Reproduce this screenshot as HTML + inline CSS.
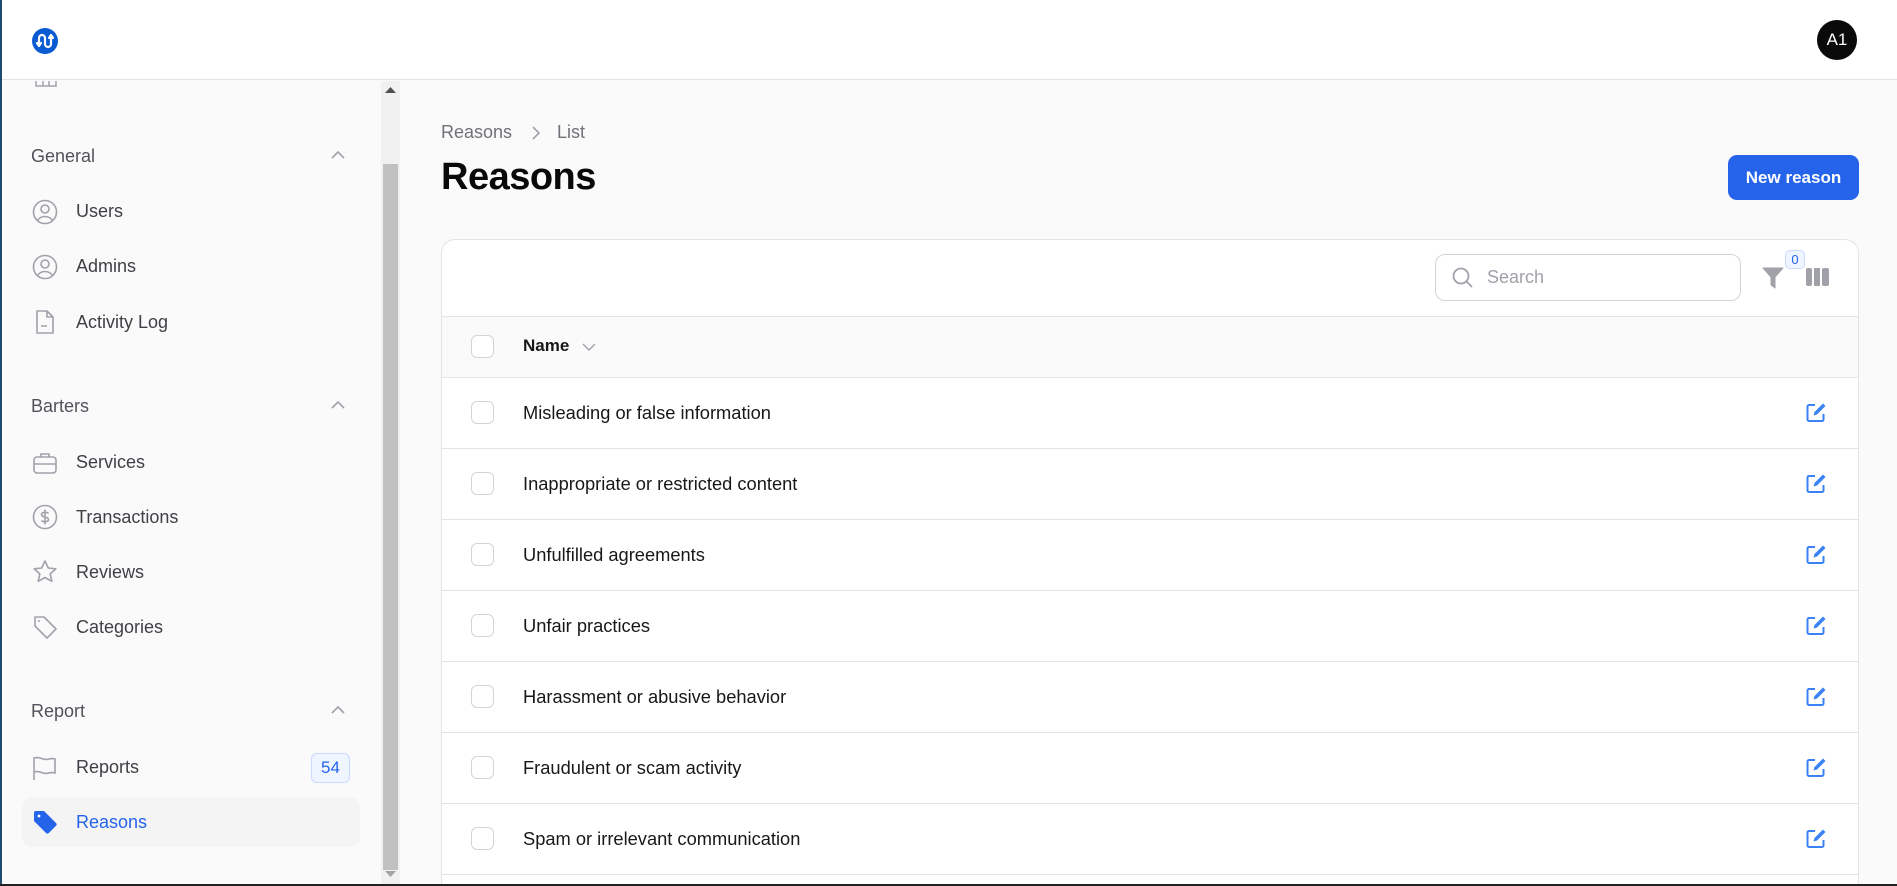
<!DOCTYPE html>
<html><head><meta charset="utf-8"><style>
*{box-sizing:border-box;margin:0;padding:0}
html,body{width:1897px;height:886px;overflow:hidden}
body{background:#fafafa;font-family:"Liberation Sans",sans-serif;position:relative;color:#18181b}
.hdr{position:absolute;left:0;top:0;width:1897px;height:80px;background:#fff;border-bottom:1px solid #e4e4e7}
.lb{position:absolute;left:0;top:0;width:2px;height:886px;background:#1e4b6e}
.bot{position:absolute;left:0;top:884px;width:1897px;height:2px;background:#222}
.side{position:absolute;left:0;top:81px;width:381px;height:805px;background:#fafafa}
.sb{position:absolute;left:381px;top:81px;width:19px;height:805px;background:#f1f1f1}
.thumb{position:absolute;left:383px;top:164px;width:15px;height:706px;background:#c1c1c1}
.sec{position:absolute;left:31px;font-size:18px;color:#52525b}
.chev{position:absolute;left:331px}
.it{position:absolute;left:76px;font-size:18px;color:#3f3f46}
.ic{position:absolute;left:32px;width:26px;height:26px}
.card{position:absolute;left:441px;top:239px;width:1418px;height:660px;background:#fff;border:1px solid #e4e4e7;border-radius:14px;overflow:hidden}
.row{position:absolute;left:0;width:1418px;height:71px;border-top:1px solid #e4e4e7}
.cb{position:absolute;left:29px;width:23px;height:23px;border:1px solid #d4d4d8;border-radius:6px;background:#fff;top:23px}
.rt{position:absolute;left:81px;top:24px;font-size:18.3px;color:#18181b}
.ed{position:absolute;left:1364px;top:24px}
</style></head><body>
<div class="hdr">
<svg style="position:absolute;left:31px;top:27px" width="28" height="28" viewBox="0 0 28 28"><circle cx="14" cy="14" r="13" fill="#0b5bd3"/><path d="M8 18V11a3 3 0 0 1 6 0v6a3 3 0 0 0 6 0v-8M6 16l2 3 2-3M18 11l2-3 2 3" stroke="#fff" stroke-width="2.2" fill="none" stroke-linecap="round" stroke-linejoin="round"/></svg>
<div style="position:absolute;left:1817px;top:20px;width:40px;height:40px;border-radius:50%;background:#0a0a0a;color:#fff;font-size:17px;text-align:center;line-height:40px">A1</div>
</div>
<div class="side">
<svg style="position:absolute;left:35px;top:0" width="22" height="6"><path d="M1 0v5h20V0M8 0v5M14 0v5" stroke="#a1a1aa" stroke-width="1.5" fill="none"/></svg>
<div class="sec" style="top:65px">General</div>
<svg class="chev" style="top:69px" width="14" height="10"><path d="M1 8l6-6 6 6" stroke="#a1a1aa" stroke-width="1.6" fill="none"/></svg>
<svg class="ic" style="top:118px" viewBox="0 0 26 26"><circle cx="13" cy="13" r="11.5" stroke="#a1a1aa" stroke-width="1.6" fill="none"/><circle cx="13" cy="10" r="4" stroke="#a1a1aa" stroke-width="1.6" fill="none"/><path d="M5.5 21.5c2-3 4.5-4 7.5-4s5.5 1 7.5 4" stroke="#a1a1aa" stroke-width="1.6" fill="none"/></svg>
<div class="it" style="top:120px">Users</div>
<svg class="ic" style="top:173px" viewBox="0 0 26 26"><circle cx="13" cy="13" r="11.5" stroke="#a1a1aa" stroke-width="1.6" fill="none"/><circle cx="13" cy="10" r="4" stroke="#a1a1aa" stroke-width="1.6" fill="none"/><path d="M5.5 21.5c2-3 4.5-4 7.5-4s5.5 1 7.5 4" stroke="#a1a1aa" stroke-width="1.6" fill="none"/></svg>
<div class="it" style="top:175px">Admins</div>
<svg class="ic" style="top:228px" viewBox="0 0 26 26"><path d="M5 2h10l6 6v16H5z M15 2v6h6 M9 17h6" stroke="#a1a1aa" stroke-width="1.6" fill="none" stroke-linejoin="round"/></svg>
<div class="it" style="top:231px">Activity Log</div>
<div class="sec" style="top:315px">Barters</div>
<svg class="chev" style="top:319px" width="14" height="10"><path d="M1 8l6-6 6 6" stroke="#a1a1aa" stroke-width="1.6" fill="none"/></svg>
<svg class="ic" style="top:369px" viewBox="0 0 26 26"><rect x="2" y="7" width="22" height="16" rx="3" stroke="#a1a1aa" stroke-width="1.6" fill="none"/><path d="M9 7V4h8v3M2 14h22" stroke="#a1a1aa" stroke-width="1.6" fill="none"/></svg>
<div class="it" style="top:371px">Services</div>
<svg class="ic" style="top:423px" viewBox="0 0 26 26"><circle cx="13" cy="13" r="11.5" stroke="#a1a1aa" stroke-width="1.6" fill="none"/><path d="M16.5 9.5c-1-1.5-7-2-7 1s7 2 7 5-6 2.5-7 1M13 5.5v15" stroke="#a1a1aa" stroke-width="1.6" fill="none"/></svg>
<div class="it" style="top:426px">Transactions</div>
<svg class="ic" style="top:478px" viewBox="0 0 26 26"><path d="M13 2l3.3 7 7.5.8-5.6 5.1 1.6 7.4L13 18.5l-6.8 3.8 1.6-7.4L2.2 9.8l7.5-.8z" stroke="#a1a1aa" stroke-width="1.6" fill="none" stroke-linejoin="round"/></svg>
<div class="it" style="top:481px">Reviews</div>
<svg class="ic" style="top:533px" viewBox="0 0 26 26"><path d="M3 3h9l12 12-9 9L3 12z" stroke="#a1a1aa" stroke-width="1.6" fill="none" stroke-linejoin="round"/><circle cx="7" cy="7" r="1" fill="#a1a1aa"/></svg>
<div class="it" style="top:536px">Categories</div>
<div class="sec" style="top:620px">Report</div>
<svg class="chev" style="top:624px" width="14" height="10"><path d="M1 8l6-6 6 6" stroke="#a1a1aa" stroke-width="1.6" fill="none"/></svg>
<svg class="ic" style="top:674px" viewBox="0 0 26 26"><path d="M2 25V3c7-2 8 3 15 1 3-.8 6 0 6 0v14s-3-.8-6 0c-7 2-8-3-15-1" stroke="#a1a1aa" stroke-width="1.6" fill="none"/></svg>
<div class="it" style="top:676px">Reports</div>
<div style="position:absolute;left:311px;top:672px;width:39px;height:30px;border:1px solid #c7dbfb;background:#eff5ff;border-radius:6px;color:#2563eb;font-size:17px;text-align:center;line-height:28px">54</div>
<div style="position:absolute;left:22px;top:716px;width:338px;height:50px;background:#f4f4f5;border-radius:10px"></div>
<svg class="ic" style="top:728px" viewBox="0 0 26 26"><path d="M2 4a2 2 0 0 1 2-2h8l12 12a2 2 0 0 1 0 2.8l-7.2 7.2a2 2 0 0 1-2.8 0L2 12z" fill="#2563eb"/><circle cx="7" cy="7" r="1.4" fill="#fff"/></svg>
<div class="it" style="top:731px;color:#2563eb">Reasons</div>
</div>
<div class="sb"></div><div class="thumb"></div>
<svg style="position:absolute;left:385px;top:87px" width="11" height="7"><path d="M0 6l5.5-6 5.5 6z" fill="#505050"/></svg>
<svg style="position:absolute;left:385px;top:871px" width="11" height="7"><path d="M0 0l5.5 6 5.5-6z" fill="#a3a3a3"/></svg>
<div style="position:absolute;left:441px;top:122px;font-size:18px;color:#71717a">Reasons</div>
<svg style="position:absolute;left:531px;top:126px" width="10" height="14"><path d="M2 1l6 6-6 6" stroke="#a1a1aa" stroke-width="1.6" fill="none"/></svg>
<div style="position:absolute;left:557px;top:122px;font-size:18px;color:#71717a">List</div>
<div style="position:absolute;left:441px;top:156px;font-size:38px;font-weight:bold;color:#09090b;letter-spacing:-0.5px">Reasons</div>
<div style="position:absolute;left:1728px;top:155px;width:131px;height:45px;background:#2563eb;border-radius:9px;color:#fff;font-weight:bold;font-size:17px;text-align:center;line-height:45px">New reason</div>
<div class="card">
<div style="position:absolute;left:993px;top:14px;width:306px;height:47px;border:1px solid #d4d4d8;border-radius:10px">
<svg style="position:absolute;left:16px;top:12px" width="22" height="22" viewBox="0 0 22 22"><circle cx="9" cy="9" r="7.5" stroke="#a1a1aa" stroke-width="1.8" fill="none"/><path d="M14.5 14.5l5.5 5.5" stroke="#a1a1aa" stroke-width="1.8"/></svg>
<div style="position:absolute;left:51px;top:12px;font-size:18px;color:#a1a1aa">Search</div></div>
<svg style="position:absolute;left:1320px;top:26px" width="22" height="23" viewBox="0 0 22 23"><path d="M1 2h20l-8 9v11l-4-3v-8z" fill="#a1a1aa" stroke="#a1a1aa" stroke-linejoin="round"/></svg>
<div style="position:absolute;left:1343px;top:10px;width:20px;height:19px;border:1px solid #c7dbfb;background:#eff5ff;border-radius:5px;color:#2563eb;font-size:13px;text-align:center;line-height:17px">0</div>
<svg style="position:absolute;left:1364px;top:28px" width="23" height="18"><rect x="0" y="0" width="6" height="18" rx="2" fill="#a1a1aa"/><rect x="8" y="0" width="6" height="18" fill="#a1a1aa"/><rect x="16" y="0" width="7" height="18" rx="2" fill="#a1a1aa"/></svg>
<div class="row" style="top:76px;height:61px;background:#fafafa"><div class="cb" style="top:18px"></div><div class="rt" style="top:19px;font-weight:bold;font-size:17px">Name</div>
<svg style="position:absolute;left:140px;top:26px" width="14" height="9"><path d="M1 1l6 6 6-6" stroke="#a1a1aa" stroke-width="1.4" fill="none"/></svg></div>
<div class="row" style="top:137px"><div class="cb"></div><div class="rt">Misleading or false information</div><svg class="ed" width="21" height="21" viewBox="0 0 21 21"><path d="M9 3H3a1.5 1.5 0 0 0-1.5 1.5v13A1.5 1.5 0 0 0 3 19h13a1.5 1.5 0 0 0 1.5-1.5V12" stroke="#3b82f6" stroke-width="2" fill="none"/><path d="M17 1.5l2.5 2.5L11 12.5l-3.5 1 1-3.5z" fill="#3b82f6"/></svg></div>
<div class="row" style="top:208px"><div class="cb"></div><div class="rt">Inappropriate or restricted content</div><svg class="ed" width="21" height="21" viewBox="0 0 21 21"><path d="M9 3H3a1.5 1.5 0 0 0-1.5 1.5v13A1.5 1.5 0 0 0 3 19h13a1.5 1.5 0 0 0 1.5-1.5V12" stroke="#3b82f6" stroke-width="2" fill="none"/><path d="M17 1.5l2.5 2.5L11 12.5l-3.5 1 1-3.5z" fill="#3b82f6"/></svg></div>
<div class="row" style="top:279px"><div class="cb"></div><div class="rt">Unfulfilled agreements</div><svg class="ed" width="21" height="21" viewBox="0 0 21 21"><path d="M9 3H3a1.5 1.5 0 0 0-1.5 1.5v13A1.5 1.5 0 0 0 3 19h13a1.5 1.5 0 0 0 1.5-1.5V12" stroke="#3b82f6" stroke-width="2" fill="none"/><path d="M17 1.5l2.5 2.5L11 12.5l-3.5 1 1-3.5z" fill="#3b82f6"/></svg></div>
<div class="row" style="top:350px"><div class="cb"></div><div class="rt">Unfair practices</div><svg class="ed" width="21" height="21" viewBox="0 0 21 21"><path d="M9 3H3a1.5 1.5 0 0 0-1.5 1.5v13A1.5 1.5 0 0 0 3 19h13a1.5 1.5 0 0 0 1.5-1.5V12" stroke="#3b82f6" stroke-width="2" fill="none"/><path d="M17 1.5l2.5 2.5L11 12.5l-3.5 1 1-3.5z" fill="#3b82f6"/></svg></div>
<div class="row" style="top:421px"><div class="cb"></div><div class="rt">Harassment or abusive behavior</div><svg class="ed" width="21" height="21" viewBox="0 0 21 21"><path d="M9 3H3a1.5 1.5 0 0 0-1.5 1.5v13A1.5 1.5 0 0 0 3 19h13a1.5 1.5 0 0 0 1.5-1.5V12" stroke="#3b82f6" stroke-width="2" fill="none"/><path d="M17 1.5l2.5 2.5L11 12.5l-3.5 1 1-3.5z" fill="#3b82f6"/></svg></div>
<div class="row" style="top:492px"><div class="cb"></div><div class="rt">Fraudulent or scam activity</div><svg class="ed" width="21" height="21" viewBox="0 0 21 21"><path d="M9 3H3a1.5 1.5 0 0 0-1.5 1.5v13A1.5 1.5 0 0 0 3 19h13a1.5 1.5 0 0 0 1.5-1.5V12" stroke="#3b82f6" stroke-width="2" fill="none"/><path d="M17 1.5l2.5 2.5L11 12.5l-3.5 1 1-3.5z" fill="#3b82f6"/></svg></div>
<div class="row" style="top:563px"><div class="cb"></div><div class="rt">Spam or irrelevant communication</div><svg class="ed" width="21" height="21" viewBox="0 0 21 21"><path d="M9 3H3a1.5 1.5 0 0 0-1.5 1.5v13A1.5 1.5 0 0 0 3 19h13a1.5 1.5 0 0 0 1.5-1.5V12" stroke="#3b82f6" stroke-width="2" fill="none"/><path d="M17 1.5l2.5 2.5L11 12.5l-3.5 1 1-3.5z" fill="#3b82f6"/></svg></div>
<div class="row" style="top:634px"></div>
</div>
<div class="lb"></div><div class="bot"></div>
</body></html>
